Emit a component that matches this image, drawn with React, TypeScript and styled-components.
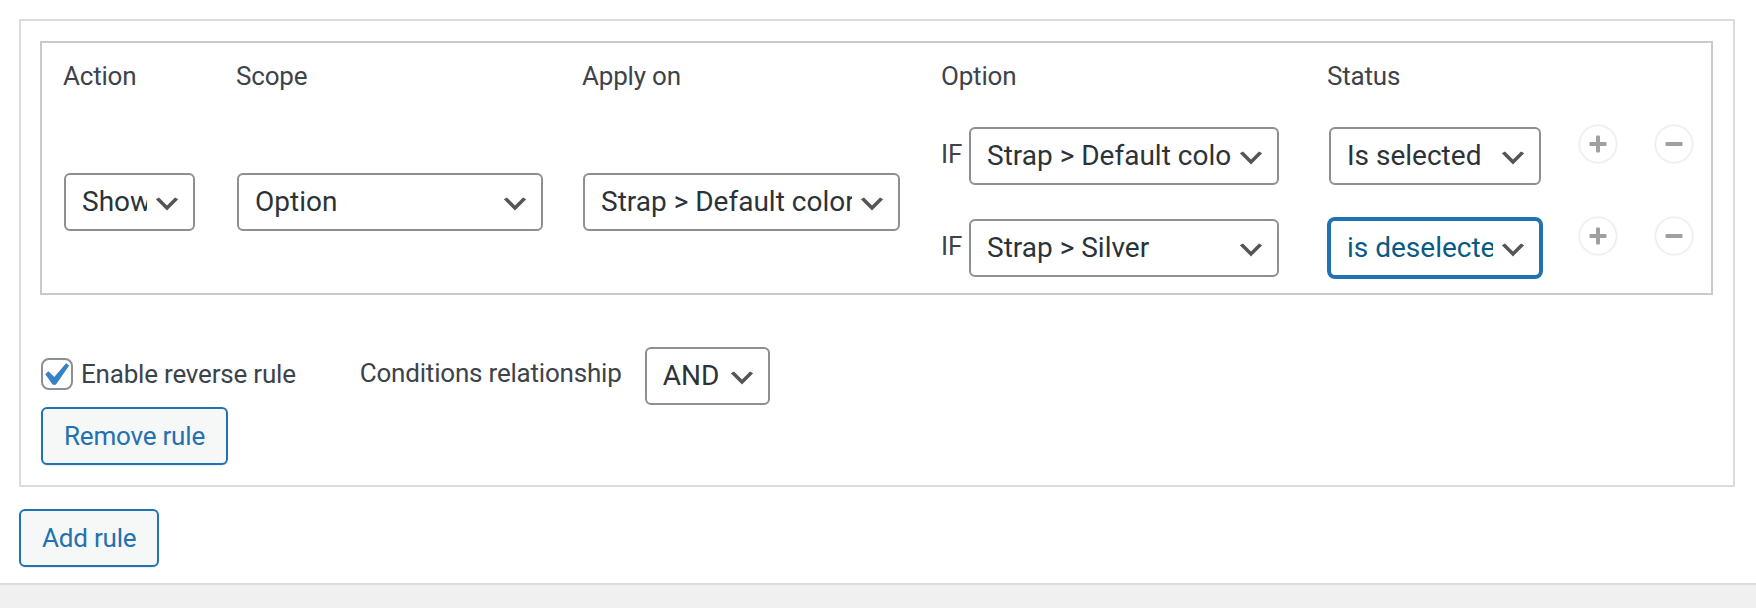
import React from 'react';
import styled, { createGlobalStyle } from 'styled-components';

const CONDITIONS = [
  { option: 'Strap > Default color', status: 'Is selected', focused: false },
  { option: 'Strap > Silver', status: 'is deselected', focused: true },
];

const HEADERS = ['Action', 'Scope', 'Apply on', 'Option', 'Status', '', ''];

const Chevron = () => (
  <ChevronSvg viewBox="0 0 20 20" aria-hidden>
    <path d="M5 6l5 5 5-5 2 1-7 7-7-7 2-1z" fill="#555" />
  </ChevronSvg>
);

type SelectProps = { value: string; width: number; focused?: boolean };

const Select = ({ value, width, focused = false }: SelectProps) => (
  <SelectBox $width={width} $focused={focused}>
    <SelectValue>{value}</SelectValue>
    <Chevron />
  </SelectBox>
);

const PlusIcon = () => (
  <svg width="18" height="18" viewBox="0 0 18 18" aria-hidden>
    <rect x="0.5" y="7" width="17" height="4" rx="1" fill="#a0a0a0" />
    <rect x="7" y="0.5" width="4" height="17" rx="1" fill="#a0a0a0" />
  </svg>
);

const MinusIcon = () => (
  <svg width="18" height="18" viewBox="0 0 18 18" aria-hidden>
    <rect x="0.5" y="7" width="17" height="4" rx="1" fill="#a0a0a0" />
  </svg>
);

const App = () => {
  return (
    <>
      <GlobalStyle />
      <Page>
        <RuleBox>
          <ConditionTable>
            {HEADERS.map((h, idx) => (
              <HeadCell key={`head-${idx}`}>{h}</HeadCell>
            ))}
            <FieldCell>
              <Select value="Show" width={131} />
            </FieldCell>
            <FieldCell>
              <Select value="Option" width={306} />
            </FieldCell>
            <FieldCell>
              <Select value="Strap > Default color" width={317} />
            </FieldCell>
            <ConditionList>
              {CONDITIONS.map((c, idx) => (
                <ConditionRow key={`cond-${idx}`}>
                  <OptionCell>
                    <IfLabel>IF</IfLabel>
                    <Select value={c.option} width={310} />
                  </OptionCell>
                  <StatusCell>
                    <Select value={c.status} width={212} focused={c.focused} />
                  </StatusCell>
                  <RoundButton type="button" aria-label="Add condition">
                    <PlusIcon />
                  </RoundButton>
                  <RoundButton type="button" aria-label="Remove condition">
                    <MinusIcon />
                  </RoundButton>
                </ConditionRow>
              ))}
            </ConditionList>
          </ConditionTable>

          <OptionsRow>
            <CheckLabel>
              <Checkbox>
                <svg viewBox="0 0 20 20" aria-hidden>
                  <path
                    d="M14.83 4.89l1.34.94-5.81 8.38H9.02L5.78 9.67l1.34-1.25 2.57 2.4z"
                    fill="#3582c4"
                  />
                </svg>
              </Checkbox>
              Enable reverse rule
            </CheckLabel>
            <RelationLabel>Conditions relationship</RelationLabel>
            <Select value="AND" width={125} />
          </OptionsRow>
          <Button type="button" $ml={1}>Remove rule</Button>
        </RuleBox>
        <AddRow>
          <Button type="button">Add rule</Button>
        </AddRow>
        <Footer />
      </Page>
    </>
  );
};

export default App;

const GlobalStyle = createGlobalStyle`
  html, body {
    margin: 0;
    padding: 0;
    background: #fff;
  }
  body {
    font-family: Roboto, "Liberation Sans", Arial, sans-serif;
    color: #3c434a;
  }
  * {
    box-sizing: border-box;
  }
`;

const Page = styled.div`
  width: 1756px;
  height: 608px;
  display: flex;
  flex-direction: column;
  overflow: hidden;
`;

const RuleBox = styled.div`
  margin: 19px 21px 0 19px;
  border: 2px solid #dcdcde;
  padding: 20px 20px 20px 19px;
`;

const ConditionTable = styled.div`
  border: 2px solid #c8cbce;
  padding: 15px 0 16px 21px;
  display: grid;
  grid-template-columns: 173px 346px 359px 386px 253px 76px 36px;
  row-gap: 33px;
`;

const HeadCell = styled.div`
  font-size: 26px;
  line-height: 36px;
  height: 36px;
  color: #3c434a;
  letter-spacing: -0.2px;
  white-space: nowrap;
`;

const FieldCell = styled.div`
  align-self: center;
  padding-left: 1px;
`;

const ConditionList = styled.div`
  grid-column: 4 / span 4;
  display: flex;
  flex-direction: column;
  gap: 34px;
`;

const ConditionRow = styled.div`
  display: grid;
  grid-template-columns: 386px 253px 76px 36px;
  align-items: start;
`;

const OptionCell = styled.div`
  display: flex;
  align-items: flex-start;
`;

const IfLabel = styled.span`
  width: 28px;
  margin-top: 9px;
  font-size: 26px;
  line-height: 36px;
  color: #3c434a;
`;

const StatusCell = styled.div`
  padding-left: 2px;
`;

const SelectBox = styled.div<{ $width: number; $focused: boolean }>`
  width: ${(p) => p.$width}px;
  height: 58px;
  flex-shrink: 0;
  display: flex;
  align-items: center;
  padding: 0 10px 0 16px;
  background: #fff;
  border: 2px solid ${(p) => (p.$focused ? '#2271b1' : '#8c8f94')};
  border-radius: 6px;
  box-shadow: ${(p) => (p.$focused ? '0 0 0 2px #2271b1' : 'none')};
  color: ${(p) => (p.$focused ? '#0a5a84' : '#2c3338')};
  font-size: 28px;
`;

const SelectValue = styled.span`
  flex: 1;
  min-width: 0;
  overflow: hidden;
  white-space: nowrap;
  line-height: 1.2;
`;

const ChevronSvg = styled.svg`
  width: 32px;
  height: 32px;
  flex-shrink: 0;
  margin: 3px 0 0 4px;
`;

const RoundButton = styled.button`
  width: 36px;
  height: 36px;
  margin-top: -1px;
  padding: 0;
  border: none;
  border-radius: 50%;
  background: #fff;
  box-shadow: 0 0 3px rgba(0, 0, 0, 0.22);
  display: flex;
  align-items: center;
  justify-content: center;
  cursor: pointer;
`;

const OptionsRow = styled.div`
  margin-top: 52px;
  display: flex;
  align-items: center;
`;

const CheckLabel = styled.label`
  display: flex;
  align-items: center;
  gap: 8px;
  margin: 0 64px 5px 1px;
  font-size: 26px;
  line-height: 36px;
  letter-spacing: -0.2px;
  color: #3c434a;
`;

const Checkbox = styled.span`
  position: relative;
  width: 32px;
  height: 32px;
  flex-shrink: 0;
  border: 2px solid #8c8f94;
  border-radius: 8px;
  background: #fff;

  svg {
    position: absolute;
    left: -11px;
    top: -8px;
    width: 46px;
    height: 46px;
  }
`;

const RelationLabel = styled.span`
  margin: 0 23px 7px 0;
  font-size: 26px;
  line-height: 36px;
  letter-spacing: -0.2px;
  color: #3c434a;
  white-space: nowrap;
`;

const Button = styled.button<{ $ml?: number }>`
  display: inline-flex;
  align-items: center;
  height: 58px;
  margin: 2px 0 0 ${(p) => p.$ml ?? 0}px;
  padding: 0 21px;
  border: 2px solid #2271b1;
  border-radius: 6px;
  background: #f6f7f7;
  color: #2271b1;
  font-family: Roboto, "Liberation Sans", Arial, sans-serif;
  font-size: 26px;
  letter-spacing: -0.2px;
  line-height: 1;
  cursor: pointer;
  box-shadow: 0 1px 1px rgba(0, 0, 0, 0.08);
`;

const AddRow = styled.div`
  margin: 20px 0 0 19px;
`;

const Footer = styled.div`
  margin-top: auto;
  height: 25px;
  background: #f0f0f1;
  border-top: 2px solid #dcdcde;
`;
